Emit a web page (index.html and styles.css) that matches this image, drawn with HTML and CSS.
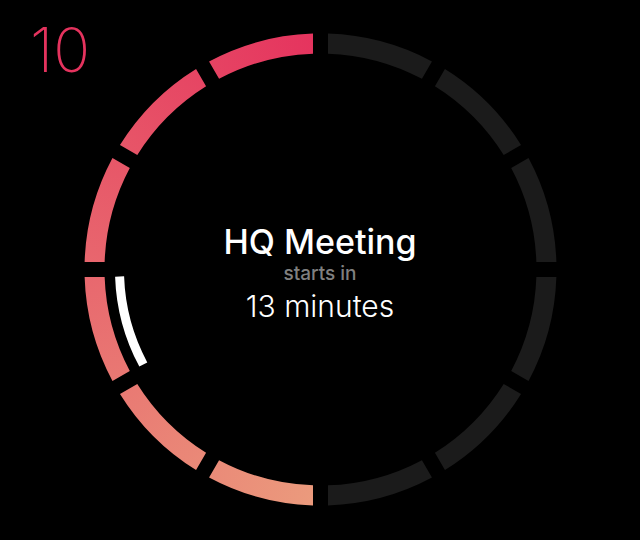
FILE: index.html
```
<!DOCTYPE html>
<html lang="en">
<head>
<meta charset="utf-8">
<meta name="viewport" content="width=device-width, initial-scale=1">
<title>Next event</title>
<link rel="stylesheet" href="styles.css">
</head>
<body>
<main class="clock">
  <p class="hour">10</p>
  <svg class="dial" viewBox="-240.5 -239.5 480 480" aria-hidden="true">
    <defs>
      <!-- One five-minute block, drawn for the first slot after twelve -->
      <path id="block" d="M7.5 -235.88A236 236 0 0 1 111.44 -208.03L101.44 -190.7A216 216 0 0 0 7.5 -215.87Z"/>
      <linearGradient id="g6" gradientUnits="userSpaceOnUse" x1="0" y1="-226" x2="113" y2="-196"><stop stop-color="#eb9b7d"/><stop offset="1" stop-color="#ea8a78"/></linearGradient>
      <linearGradient id="g7" gradientUnits="userSpaceOnUse" x1="0" y1="-226" x2="113" y2="-196"><stop stop-color="#ea8a78"/><stop offset="1" stop-color="#e97973"/></linearGradient>
      <linearGradient id="g8" gradientUnits="userSpaceOnUse" x1="0" y1="-226" x2="113" y2="-196"><stop stop-color="#e97973"/><stop offset="1" stop-color="#e8676e"/></linearGradient>
      <linearGradient id="g9" gradientUnits="userSpaceOnUse" x1="0" y1="-226" x2="113" y2="-196"><stop stop-color="#e8676e"/><stop offset="1" stop-color="#e75668"/></linearGradient>
      <linearGradient id="g10" gradientUnits="userSpaceOnUse" x1="0" y1="-226" x2="113" y2="-196"><stop stop-color="#e75668"/><stop offset="1" stop-color="#e64463"/></linearGradient>
      <linearGradient id="g11" gradientUnits="userSpaceOnUse" x1="0" y1="-226" x2="113" y2="-196"><stop stop-color="#e64463"/><stop offset="1" stop-color="#e5335e"/></linearGradient>
    </defs>
    <g class="idle">
      <use href="#block"/>
      <use href="#block" transform="rotate(30)"/>
      <use href="#block" transform="rotate(60)"/>
      <use href="#block" transform="rotate(90)"/>
      <use href="#block" transform="rotate(120)"/>
      <use href="#block" transform="rotate(150)"/>
    </g>
    <use href="#block" transform="rotate(180)" fill="url(#g6)"/>
    <use href="#block" transform="rotate(210)" fill="url(#g7)"/>
    <use href="#block" transform="rotate(240)" fill="url(#g8)"/>
    <use href="#block" transform="rotate(270)" fill="url(#g9)"/>
    <use href="#block" transform="rotate(300)" fill="url(#g10)"/>
    <use href="#block" transform="rotate(330)" fill="url(#g11)"/>
    <path class="event" d="M-200.9 7A201 201 0 0 0 -177.2 95"/>
  </svg>
  <section class="next">
    <h1 class="title">HQ Meeting</h1>
    <p class="label">starts in</p>
    <p class="remaining">13 minutes</p>
  </section>
</main>
</body>
</html>
```
FILE: styles.css
```
* {
  box-sizing: border-box;
}

body {
  margin: 0;
  background: #000;
  color: #fff;
  font-family: Inter, "Liberation Sans", sans-serif;
}

.clock {
  display: grid;
  min-height: 100vh;
  place-items: center;
}

.clock > * {
  grid-area: 1 / 1;
}

.hour {
  place-self: start;
  margin: 0;
  padding: 20px 30px;
  color: #e5335e;
  font-size: 61px;
  font-weight: 200;
  line-height: 60px;
}

.dial {
  width: 100%;
  max-width: 480px;
}

.idle {
  fill: #1b1b1b;
}

.event {
  fill: none;
  stroke: #fff;
  stroke-width: 9;
}

.next {
  padding-top: 8px;
  text-align: center;
}

.title,
.label,
.remaining {
  margin: 0;
}

.title {
  font-size: 34px;
  font-weight: 500;
  line-height: 40px;
}

.label {
  color: #808080;
  font-size: 19px;
  font-weight: 500;
  line-height: 24px;
}

.remaining {
  font-size: 30px;
  font-weight: 300;
  line-height: 40px;
}
```
